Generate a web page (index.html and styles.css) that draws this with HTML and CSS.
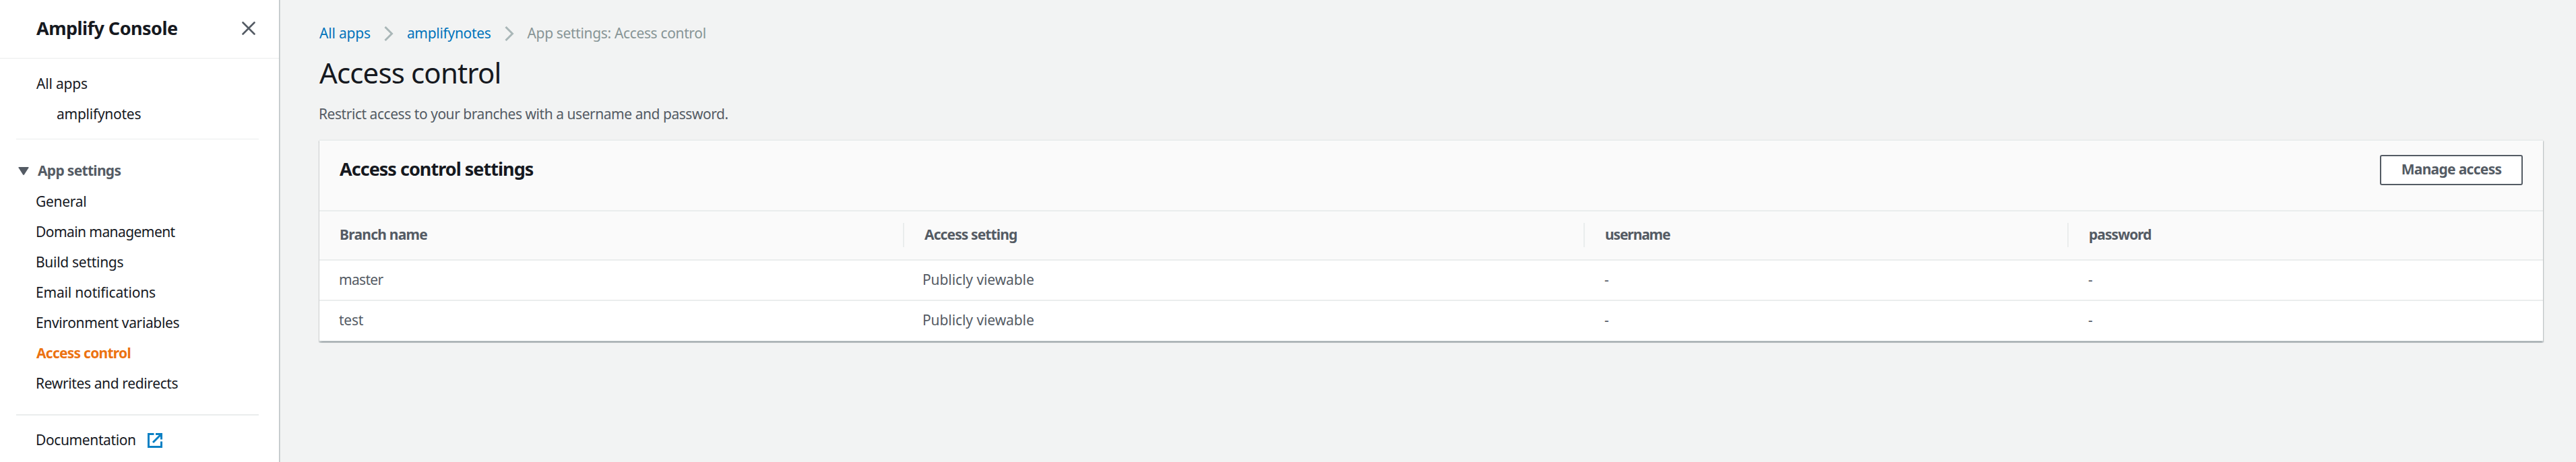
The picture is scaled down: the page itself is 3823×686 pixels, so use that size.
FILE: index.html
```html
<!DOCTYPE html>
<html lang="en">
<head>
<meta charset="utf-8">
<title>Amplify Console</title>
<link rel="stylesheet" href="styles.css">
</head>
<body>
<div class="app">
  <aside class="sidebar">
    <header class="side-head">
      <h2 class="side-title">Amplify Console</h2>
      <svg class="close" viewBox="0 0 20 20"><path d="M1.5 1.5 18.5 18.5M18.5 1.5 1.5 18.5"/></svg>
    </header>
    <nav class="side-nav">
      <a class="item top sp-all">All apps</a>
      <a class="item sub sp-app">amplifynotes</a>
      <hr class="rule thin">
      <div class="section"><svg class="caret" viewBox="0 0 16 12"><path d="M1.2 0H14.8Q16 0 15.4 1.2L9 11.2Q8 12.6 7 11.2L.6 1.2Q0 0 1.2 0Z"/></svg><span class="section-name">App settings</span></div>
      <a class="item sp-gen">General</a>
      <a class="item sp-dom">Domain management</a>
      <a class="item sp-bld">Build settings</a>
      <a class="item sp-mail">Email notifications</a>
      <a class="item sp-env">Environment variables</a>
      <a class="item active">Access control</a>
      <a class="item sp-rew">Rewrites and redirects</a>
      <hr class="rule">
      <a class="item doc"><span class="sp-doc">Documentation</span><svg class="ext" viewBox="0 0 22 22"><path d="M9.5 1.5H1.5V20.5H20.5V12.5M12 1.5H20.5V9.5M20 2 8 14"/></svg></a>
    </nav>
  </aside>
  <main class="main">
    <nav class="crumbs">
      <a class="crumb sp-all">All apps</a>
      <svg class="chev" viewBox="0 0 14 22"><path d="M1.5 1 11.5 11 1.5 21"/></svg>
      <a class="crumb sp-crumb">amplifynotes</a>
      <svg class="chev" viewBox="0 0 14 22"><path d="M1.5 1 11.5 11 1.5 21"/></svg>
      <span class="crumb here">App settings: Access control</span>
    </nav>
    <h1 class="title">Access control</h1>
    <p class="desc">Restrict access to your branches with a username and password.</p>
    <section class="card">
      <header class="card-head">
        <h2 class="card-title">Access control settings</h2>
        <button class="btn">Manage access</button>
      </header>
      <div class="row head">
        <div class="cell"><span class="sp-bn">Branch name</span></div>
        <div class="cell"><span class="sp-as">Access setting</span></div>
        <div class="cell"><span class="sp-un">username</span></div>
        <div class="cell"><span class="sp-pw">password</span></div>
      </div>
      <div class="row">
        <div class="cell"><span class="sp-mas">master</span></div>
        <div class="cell setting"><span class="sp-pub">Publicly viewable</span></div>
        <div class="cell"><span>-</span></div>
        <div class="cell"><span>-</span></div>
      </div>
      <div class="row">
        <div class="cell"><span class="sp-test">test</span></div>
        <div class="cell setting"><span class="sp-pub">Publicly viewable</span></div>
        <div class="cell"><span>-</span></div>
        <div class="cell"><span>-</span></div>
      </div>
    </section>
  </main>
</div>
</body>
</html>
```
FILE: styles.css
```css
* { box-sizing: border-box; }
body { margin: 0; font: 21px/33px "Noto Sans", "Open Sans", sans-serif; color: #16191f; background: #f2f3f3; }
h1, h2, p { margin: 0; }
.app { display: flex; height: 686px; overflow: hidden; }

/* Sidebar */
.sidebar { flex: none; width: 415px; background: #fff; border-right: 1px solid #b8c0c2; box-shadow: 1px 0 1px rgba(0, 28, 36, .1); }
.side-head { display: flex; justify-content: space-between; align-items: flex-start; height: 87px; padding: 21px 35px 0 54px; border-bottom: 1px solid #eaeded; }
.side-title { font-size: 27px; line-height: 42px; font-weight: 700; letter-spacing: -.53px; }
.close { width: 20px; height: 20px; margin-top: 11px; fill: none; stroke: #545b64; stroke-width: 2.6; stroke-linecap: round; }
.side-nav { padding: 15px 30px 0 24px; }
.item { display: block; height: 45px; line-height: 45px; padding-left: 29px; white-space: nowrap; }
.item.top { padding-left: 30px; }
.item.sub { padding-left: 60px; }
.item.active { padding-left: 30px; font-weight: 700; color: #ec7211; letter-spacing: -.74px; }
.rule { height: 2px; margin: 23px 0 14px; border: 0; background: #eaeded; }
.rule.thin { height: 1px; margin: 14px 0 24px; }
.section { display: flex; align-items: flex-start; height: 46px; line-height: 45px; padding-left: 3px; color: #545b64; font-weight: 700; letter-spacing: -.69px; }
.caret { width: 16px; height: 12px; margin: 17px 13px 0 0; fill: #545b64; }
.item.doc { display: flex; }
.ext { width: 22px; height: 22px; margin: 12px 0 0 17px; fill: none; stroke: #0a80c4; stroke-width: 3; }

/* Main column */
.main { flex: 1; padding: 33px 49px 0 59px; }
.crumbs { display: flex; height: 33px; color: #0073bb; }
.crumb { white-space: nowrap; }
.crumb.here { color: #879596; letter-spacing: -.35px; }
.chev { width: 14px; height: 22px; margin: 6px 20px 0 20px; fill: none; stroke: #aab7b8; stroke-width: 3; }
.title { margin-top: 15px; font-size: 42px; line-height: 54px; font-weight: 400; letter-spacing: -.85px; }
.desc { margin: 18px 0 0 -1px; color: #545b64; letter-spacing: -.46px; }

/* Settings card */
.card { margin-top: 21px; background: #fff; border-top: 2px solid #eaeded; box-shadow: 0 1.5px 1.5px rgba(0, 28, 36, .3), 1.5px 1.5px 1.5px rgba(0, 28, 36, .15), -1.5px 1.5px 1.5px rgba(0, 28, 36, .15); }
.card-head { display: flex; justify-content: space-between; align-items: flex-start; height: 105px; padding: 21px 30px 0; background: #fafafa; border-bottom: 2px solid #eaeded; }
.card-title { font-size: 27px; line-height: 42px; letter-spacing: -.97px; }
.btn { width: 212px; height: 45px; padding: 0 0 2px; border: 2px solid #545b64; border-radius: 3px; background: #fff; color: #545b64; font: inherit; font-weight: 700; letter-spacing: -.7px; }
.row { display: grid; grid-template-columns: 868px 1010px 718px 1fr; height: 60px; border-bottom: 2px solid #eaeded; color: #545b64; line-height: 57px; }
.cell { padding-left: 29px; white-space: nowrap; }
.cell.setting { padding-left: 27px; }
.row.head { height: 73px; background: #fafafa; font-weight: 700; line-height: 34px; padding-top: 17px; }
.row.head .cell { height: 36px; padding-left: 30px; border-right: 2px solid #eaeded; }
.row.head .cell:last-child { border-right: 0; }

/* Tracking per label */
.sp-all { letter-spacing: -.19px; }
.sp-app { letter-spacing: -.25px; }
.sp-crumb { letter-spacing: -.3px; }
.sp-gen { letter-spacing: -.3px; }
.sp-dom { letter-spacing: -.57px; }
.sp-bld { letter-spacing: -.29px; }
.sp-mail { letter-spacing: -.18px; }
.sp-env { letter-spacing: -.36px; }
.sp-rew { letter-spacing: -.37px; }
.sp-doc { letter-spacing: -.38px; }
.sp-bn { letter-spacing: -.75px; }
.sp-as { letter-spacing: -.89px; }
.sp-un { letter-spacing: -1.12px; }
.sp-pw { letter-spacing: -.95px; }
.sp-mas { letter-spacing: -.68px; }
.sp-test { letter-spacing: -.25px; }
.sp-pub { letter-spacing: -.08px; }
```
